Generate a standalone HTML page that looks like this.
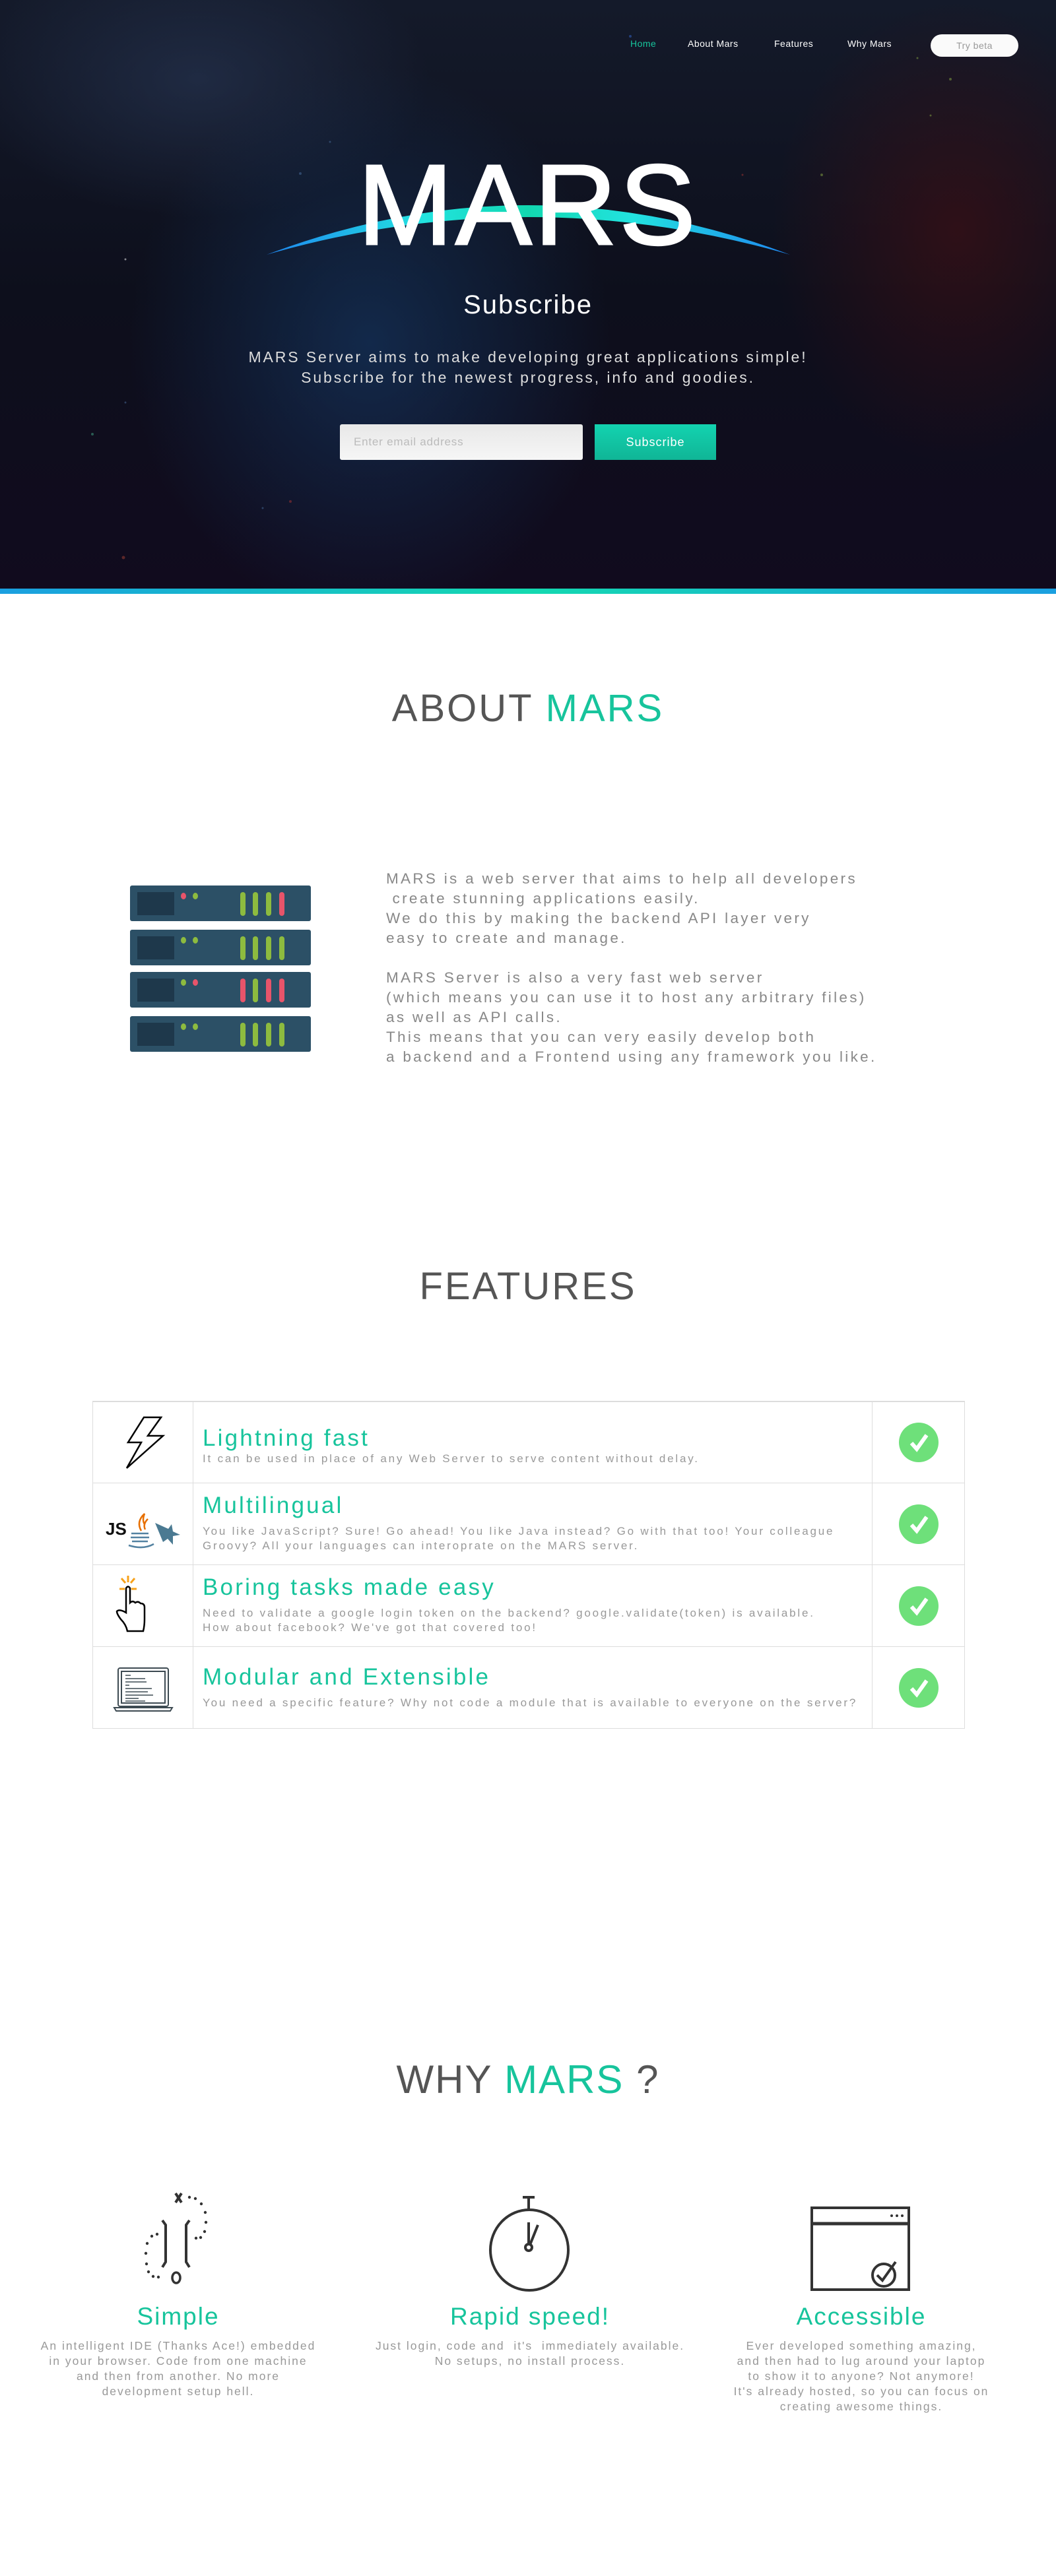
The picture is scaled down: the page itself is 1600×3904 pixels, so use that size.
<!DOCTYPE html>
<html><head><meta charset="utf-8">
<style>
*{margin:0;padding:0;box-sizing:border-box}
body{width:1600px;height:3904px;position:relative;background:#fff;font-family:"Liberation Sans",sans-serif;overflow:hidden}
.a{position:absolute}
.hero{position:absolute;left:0;top:0;width:1600px;height:892px;overflow:hidden;
background:
radial-gradient(ellipse 520px 600px at 560px 520px,rgba(20,50,90,.75),rgba(20,50,90,0) 70%),
radial-gradient(ellipse 500px 300px at 300px 120px,rgba(40,55,85,.6),rgba(40,55,85,0) 70%),
radial-gradient(ellipse 400px 500px at 1450px 350px,rgba(60,15,20,.7),rgba(60,15,20,0) 70%),
linear-gradient(180deg,#141a2a 0%,#0d0f1c 50%,#110b1e 100%);}
.bar{position:absolute;left:0;top:892px;width:1600px;height:8px;background:linear-gradient(90deg,#1a9fe0,#14d9b0 50%,#1a9fe0)}
.nav{position:absolute;top:58px;font-size:14px;color:#fff;letter-spacing:.5px}
.center{position:absolute;left:0;width:1600px;text-align:center}
.teal{color:#17c49c}
h2{font-size:58px;letter-spacing:3px;color:#555;font-weight:normal}
.row{position:absolute;left:140px;width:1322px;height:124px;border:1.5px solid #ddd;border-top:none}
.row .c1{position:absolute;left:0;top:0;width:152px;height:100%;border-right:1.5px solid #ddd}
.row .c3{position:absolute;left:1180px;top:0;width:140px;height:100%;border-left:1.5px solid #ddd}
.row .t{position:absolute;left:166px;font-size:35px;letter-spacing:3.2px;color:#17c49c}
.row .d{position:absolute;left:166px;font-size:17px;letter-spacing:2.8px;color:#999;line-height:22px}
.chk{position:absolute;left:40px;top:32px;width:60px;height:60px;border-radius:50%;background:#6ee07a}
.chk svg{position:absolute;left:0;top:0}
.col{position:absolute;top:3490px;width:480px;text-align:center}
.col .t{font-size:37px;color:#17c49c;letter-spacing:2px}
.col .d{font-size:17.5px;color:#999;letter-spacing:2px;line-height:23px;margin-top:12px}
</style></head><body>
<div class="hero">
<svg class="a" style="left:0;top:0" width="1600" height="892">
<g fill="#fff" opacity=".5">
<circle cx="190" cy="393" r="1.5"/><circle cx="455" cy="263" r="2" fill="#4a6fa0"/><circle cx="398" cy="770" r="1.5" fill="#4a6fa0"/><circle cx="140" cy="658" r="2" fill="#4a8"/><circle cx="1440" cy="120" r="2" fill="#8a4"/><circle cx="1245" cy="265" r="2" fill="#8a4"/><circle cx="440" cy="760" r="2" fill="#a33"/><circle cx="187" cy="845" r="2.5" fill="#a43"/><circle cx="955" cy="55" r="2" fill="#36c"/><circle cx="1390" cy="88" r="1.5" fill="#8a4"/><circle cx="1125" cy="265" r="1.5" fill="#a33"/><circle cx="500" cy="215" r="1.5" fill="#4a6fa0"/><circle cx="190" cy="610" r="1.5" fill="#4a6fa0"/><circle cx="1410" cy="175" r="1.5" fill="#8a4"/>
</g>
<defs><linearGradient id="g" x1="0" x2="1"><stop offset="0" stop-color="#1e86f0"/><stop offset=".3" stop-color="#22e3e0"/><stop offset=".5" stop-color="#12d7b0"/><stop offset=".7" stop-color="#22e3e0"/><stop offset="1" stop-color="#1e86f0"/></linearGradient></defs>
<path d="M404 386 Q800 236 1197 386 Q800 272 404 386Z" fill="url(#g)"/>
<text x="800" y="370" text-anchor="middle" font-family="Liberation Sans" font-size="173" letter-spacing="4" fill="#fff" stroke="#fff" stroke-width="3">MARS</text>
</svg>
<div class="nav" style="left:955px;color:#17c49c">Home</div>
<div class="nav" style="left:1042px">About Mars</div>
<div class="nav" style="left:1173px">Features</div>
<div class="nav" style="left:1284px">Why Mars</div>
<div class="a" style="left:1410px;top:52px;width:133px;height:34px;border-radius:17px;background:#fafafa;color:#999;font-size:14px;text-align:center;line-height:34px;letter-spacing:.5px">Try beta</div>
<div class="center" style="top:440px;font-size:40px;color:#fff;letter-spacing:2px">Subscribe</div>
<div class="center" style="top:526px;font-size:23px;color:#ddd;letter-spacing:2.9px;line-height:31px">MARS Server aims to make developing great applications simple!<br>Subscribe for the newest progress, info and goodies.</div>
<div class="a" style="left:515px;top:643px;width:368px;height:54px;background:linear-gradient(#e8e8e8,#f6f6f6);border-radius:3px;color:#bbb;font-size:17px;line-height:54px;padding-left:21px;letter-spacing:.8px">Enter email address</div>
<div class="a" style="left:901px;top:643px;width:184px;height:54px;background:linear-gradient(#13d3b0,#10b596);color:#fff;font-size:18px;line-height:54px;text-align:center;letter-spacing:1px">Subscribe</div>
</div>
<div class="bar"></div>

<div class="center" style="top:1040px"><h2>ABOUT <span class="teal">MARS</span></h2></div>
<svg class="a" style="left:197px;top:1342px" width="274" height="252">
<g id="s"><rect width="274" height="54" rx="3" fill="#2c5066"/><rect x="11" y="10" width="56" height="35" fill="#1e384b"/></g>
<use href="#s" y="67"/><use href="#s" y="131"/><use href="#s" y="198"/>
<g>
<ellipse cx="81" cy="16" rx="4" ry="5" fill="#e8546a"/><ellipse cx="99" cy="16" rx="4" ry="5" fill="#8dbb3f"/>
<rect x="167" y="10" width="8" height="36" rx="4" fill="#8dbb3f"/><rect x="186" y="10" width="8" height="36" rx="4" fill="#8dbb3f"/><rect x="206" y="10" width="8" height="36" rx="4" fill="#8dbb3f"/><rect x="226" y="10" width="8" height="36" rx="4" fill="#e8546a"/>
</g>
<g transform="translate(0,67)">
<ellipse cx="81" cy="16" rx="4" ry="5" fill="#8dbb3f"/><ellipse cx="99" cy="16" rx="4" ry="5" fill="#8dbb3f"/>
<rect x="167" y="10" width="8" height="36" rx="4" fill="#8dbb3f"/><rect x="186" y="10" width="8" height="36" rx="4" fill="#8dbb3f"/><rect x="206" y="10" width="8" height="36" rx="4" fill="#8dbb3f"/><rect x="226" y="10" width="8" height="36" rx="4" fill="#8dbb3f"/>
</g>
<g transform="translate(0,131)">
<ellipse cx="81" cy="16" rx="4" ry="5" fill="#8dbb3f"/><ellipse cx="99" cy="16" rx="4" ry="5" fill="#e8546a"/>
<rect x="167" y="10" width="8" height="36" rx="4" fill="#e8546a"/><rect x="186" y="10" width="8" height="36" rx="4" fill="#8dbb3f"/><rect x="206" y="10" width="8" height="36" rx="4" fill="#e8546a"/><rect x="226" y="10" width="8" height="36" rx="4" fill="#e8546a"/>
</g>
<g transform="translate(0,198)">
<ellipse cx="81" cy="16" rx="4" ry="5" fill="#8dbb3f"/><ellipse cx="99" cy="16" rx="4" ry="5" fill="#8dbb3f"/>
<rect x="167" y="10" width="8" height="36" rx="4" fill="#8dbb3f"/><rect x="186" y="10" width="8" height="36" rx="4" fill="#8dbb3f"/><rect x="206" y="10" width="8" height="36" rx="4" fill="#8dbb3f"/><rect x="226" y="10" width="8" height="36" rx="4" fill="#8dbb3f"/>
</g>
</svg>
<div class="a" style="left:585px;top:1317px;font-size:22.5px;color:#888;letter-spacing:3.3px;line-height:30px">MARS is a web server that aims to help all developers<br>&nbsp;create stunning applications easily.<br>We do this by making the backend API layer very<br>easy to create and manage.<br><br>MARS Server is also a very fast web server<br>(which means you can use it to host any arbitrary files)<br>as well as API calls.<br>This means that you can very easily develop both<br>a backend and a Frontend using any framework you like.</div>

<div class="center" style="top:1916px"><h2>FEATURES</h2></div>
<div class="a" style="left:140px;top:2123px;width:1322px;height:1.5px;background:#ddd"></div>
<div class="row" style="top:2124px"><div class="c1">
<svg width="152" height="124"><path d="M77 24 L103 24 L83 52 L106 52 L51 101 L73 62 L53 62 Z" fill="none" stroke="#000" stroke-width="2.5"/></svg>
</div><div class="t" style="top:36px">Lightning fast</div><div class="d" style="top:76px">It can be used in place of any Web Server to serve content without delay.</div><div class="c3"><div class="chk"><svg width="60" height="60"><path d="M19 31 L27 40 L42 19" fill="none" stroke="#fff" stroke-width="6"/></svg></div></div></div>
<div class="row" style="top:2248px"><div class="c1">
<svg width="152" height="124"><text x="19" y="78" font-family="Liberation Sans" font-weight="bold" font-size="26" fill="#111">JS</text>
<path d="M73 72 q-8-14 5-26 q-4 10 0 16 M79 70 q-4-8 4-16" fill="none" stroke="#e76f00" stroke-width="2.5"/>
<path d="M58 76 h26 M57 82 h28 M59 88 h24 M54 94 q22 7 38 -2" fill="none" stroke="#5382a1" stroke-width="2.5"/>
<path d="M94 60 l20 9 l5-7 l2 11 l11 5 l-11 2 l0 13 l-8-9 l-7 5 z" fill="#4b7a92"/></svg>
</div><div class="t" style="top:14px">Multilingual</div><div class="d" style="top:62px">You like JavaScript? Sure! Go ahead! You like Java instead? Go with that too! Your colleague<br>Groovy? All your languages can interoprate on the MARS server.</div><div class="c3"><div class="chk"><svg width="60" height="60"><path d="M19 31 L27 40 L42 19" fill="none" stroke="#fff" stroke-width="6"/></svg></div></div></div>
<div class="row" style="top:2372px"><div class="c1">
<svg width="152" height="124"><g stroke="#f7a21b" stroke-width="3"><path d="M53 16 v10 M43 20 l6 7 M63 20 l-6 7 M40 36 h8 M58 36 h8"/></g>
<path d="M50 71 v-36 q3-5 6 0 v22 q4-4 8 0 q4-3 8 1 q6 0 6 6 v18 q0 10-2 18 h-24 q-2-10-10-18 q-6-8-6-12 q4-4 14 2 z" fill="none" stroke="#000" stroke-width="2.5"/></svg>
</div><div class="t" style="top:14px">Boring tasks made easy</div><div class="d" style="top:62px">Need to validate a google login token on the backend? google.validate(token) is available.<br>How about facebook? We've got that covered too!</div><div class="c3"><div class="chk"><svg width="60" height="60"><path d="M19 31 L27 40 L42 19" fill="none" stroke="#fff" stroke-width="6"/></svg></div></div></div>
<div class="row" style="top:2496px"><div class="c1">
<svg width="152" height="124"><g fill="none" stroke="#3d4a52" stroke-width="2"><rect x="38" y="32" width="76" height="58" rx="3"/><rect x="43" y="37" width="66" height="48"/><path d="M32 92 h88 l-3 5 h-82 z"/></g>
<g stroke="#3d4a52" stroke-width="1.5"><path d="M49 43 h8 M49 48 h30 M49 53 h32 M49 58 h6 M49 63 h40 M49 68 h34 M49 73 h42 M49 78 h20 M49 82 h30"/></g></svg>
</div><div class="t" style="top:26px">Modular and Extensible</div><div class="d" style="top:74px">You need a specific feature? Why not code a module that is available to everyone on the server?</div><div class="c3"><div class="chk"><svg width="60" height="60"><path d="M19 31 L27 40 L42 19" fill="none" stroke="#fff" stroke-width="6"/></svg></div></div></div>

<div class="center" style="top:3117px"><h2 style="font-size:60px;letter-spacing:2px">WHY <span class="teal">MARS</span> ?</h2></div>
<svg class="a" style="left:195px;top:3320px" width="160" height="160"><g fill="#333">
<path d="M71 4 l9 14 M80 4 l-9 14" stroke="#333" stroke-width="4"/>
<circle cx="92" cy="10" r="2.2"/><circle cx="101" cy="12" r="2.2"/><circle cx="110" cy="20" r="2.2"/><circle cx="116" cy="33" r="2.2"/><circle cx="117" cy="48" r="2.2"/><circle cx="115" cy="62" r="2.2"/><circle cx="109" cy="71" r="2.2"/><circle cx="102" cy="72" r="2.2"/>
<circle cx="43" cy="66" r="2.2"/><circle cx="35" cy="69" r="2.2"/><circle cx="28" cy="80" r="2.2"/><circle cx="26" cy="95" r="2.2"/><circle cx="27" cy="111" r="2.2"/><circle cx="30" cy="123" r="2.2"/><circle cx="37" cy="130" r="2.2"/><circle cx="45" cy="131" r="2.2"/>
<ellipse cx="72" cy="132" rx="6" ry="8" fill="none" stroke="#333" stroke-width="3.5"/></g>
<path d="M51 45 l5 7 v56 l-5 8 M92 45 l-5 7 v56 l5 8" fill="none" stroke="#333" stroke-width="4"/></svg>
<svg class="a" style="left:736px;top:3328px" width="132" height="148"><g fill="none" stroke="#333" stroke-width="4"><path d="M56 2 h18 M65 2 v18"/><ellipse cx="66" cy="82" rx="59" ry="61" /><path d="M65 40 v34 M67 74 l12-30"/><circle cx="65" cy="78" r="5"/></g></svg>
<svg class="a" style="left:1227px;top:3344px" width="155" height="130"><g fill="none" stroke="#333"><rect x="3" y="2" width="147" height="124" stroke-width="4"/><path d="M3 26 h147" stroke-width="5"/><circle cx="112" cy="104" r="17" stroke-width="4"/><path d="M102 104 l8 8 l20-28" stroke-width="4"/></g><g fill="#333"><circle cx="124" cy="14" r="2"/><circle cx="132" cy="14" r="2"/><circle cx="140" cy="14" r="2"/></g></svg>
<div class="col" style="left:30px"><div class="t">Simple</div><div class="d">An intelligent IDE (Thanks Ace!) embedded<br>in your browser. Code from one machine<br>and then from another. No more<br>development setup hell.</div></div>
<div class="col" style="left:563px"><div class="t">Rapid speed!</div><div class="d">Just login, code and &nbsp;it's &nbsp;immediately available.<br>No setups, no install process.</div></div>
<div class="col" style="left:1065px"><div class="t">Accessible</div><div class="d">Ever developed something amazing,<br>and then had to lug around your laptop<br>to show it to anyone? Not anymore!<br>It's already hosted, so you can focus on<br>creating awesome things.</div></div>
</body></html>
